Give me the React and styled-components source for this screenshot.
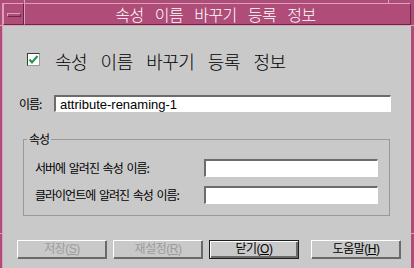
import React from 'react';
import styled, { createGlobalStyle } from 'styled-components';

const PINK = '#b04c78';
const PINK_LIGHT = '#d9a2ba';
const PINK_DARK = '#6a2645';
const GRAY = '#c9c9c9';
const FIELD_DARK = '#6c6c6c';

const GlobalStyle = createGlobalStyle`
  html, body { margin: 0; padding: 0; background: ${PINK}; }
  body { font-family: "Liberation Sans", "Noto Sans CJK KR", sans-serif; }
  * { box-sizing: border-box; }
`;

const line = `linear-gradient(${PINK_LIGHT}, ${PINK_LIGHT})`;

const Window = styled.div`
  width: 414px;
  height: 268px;
  padding: 3px 3px 0 2px;
  display: flex;
  flex-direction: column;
  background:
    ${line} 24px 0 / 1px 3px no-repeat,
    ${line} 388px 0 / 1px 3px no-repeat,
    ${line} 0 233px / 2px 1px no-repeat,
    ${line} 411px 233px / 3px 1px no-repeat,
    ${line} 0 25px / 2px 1px no-repeat,
    ${line} 411px 25px / 3px 1px no-repeat,
    ${PINK};
  overflow: hidden;
`;

const Inner = styled.div`
  flex: 1;
  display: flex;
  flex-direction: column;
  border-left: 1px solid ${PINK_LIGHT};
`;

const TitleBar = styled.header`
  height: 22px;
  display: flex;
`;

const Bevel = styled.div`
  border-style: solid;
  border-width: 1px;
  border-color: ${PINK_LIGHT} ${PINK_DARK} ${PINK_DARK} ${PINK_LIGHT};
  background: ${PINK};
`;

const MenuButton = styled(Bevel)`
  width: 21px;
  display: flex;
  align-items: center;
  justify-content: center;
  padding-top: 2px;
`;

const MenuGlyph = styled.span`
  display: block;
  width: 14px;
  height: 4px;
  border-style: solid;
  border-width: 1px;
  border-color: ${PINK_LIGHT} ${PINK_DARK} ${PINK_DARK} ${PINK_LIGHT};
`;

const Title = styled(Bevel)`
  flex: 1;
  color: #ffffff;
  font-family: "Noto Sans CJK KR", sans-serif;
  font-weight: 300;
  font-size: 16px;
  line-height: 20px;
  letter-spacing: -0.5px;
  word-spacing: 8px;
  text-align: center;
  padding-right: 4px;
`;

const Content = styled.main`
  flex: 1;
  background: ${GRAY};
  border-top: 1px solid ${PINK_LIGHT};
  border-right: 1px solid ${GRAY};
  display: flex;
  flex-direction: column;
  padding-top: 27px;
  font-family: "Liberation Sans", "Noto Sans CJK KR", sans-serif;
  color: #000;
`;

const Header = styled.div`
  display: flex;
  align-items: flex-start;
  gap: 15px;
  padding-left: 24px;
  height: 18px;
`;

const CheckBox = styled.span`
  width: 13px;
  height: 13px;
  background: #fff;
  border-style: solid;
  border-width: 1px;
  border-color: #3c3c3c #9a9a9a #9a9a9a #3c3c3c;
  display: flex;
  align-items: center;
  justify-content: center;
`;

const HeaderText = styled.h1`
  margin: -2px 0 0 0;
  font-family: "Noto Sans CJK KR", sans-serif;
  font-weight: 300;
  font-size: 18px;
  line-height: 20px;
  letter-spacing: -0.5px;
  word-spacing: 10px;
`;

const Label = styled.label`
  font-family: "Noto Sans CJK KR", sans-serif;
  font-size: 12px;
  letter-spacing: -1px;
  word-spacing: 2px;
  line-height: 14px;
  width: ${p => p.$width}px;
  flex: none;
`;

const Field = styled.div`
  width: ${p => p.$width}px;
  height: ${p => p.$height}px;
  flex: none;
  background: #fff;
  border-style: solid;
  border-width: 2px 1px 1px 2px;
  border-color: ${FIELD_DARK} #ffffff #ffffff ${FIELD_DARK};
  padding: 1px 0 0 4px;
  font-family: "Liberation Sans", sans-serif;
  font-size: 13px;
  line-height: 13px;
  white-space: nowrap;
`;

const NameRow = styled.div`
  margin-top: 24px;
  padding-left: 16px;
  display: flex;
  align-items: center;
`;

const Group = styled.fieldset`
  margin: 21px 0 0 20px;
  width: 367px;
  align-self: flex-start;
  padding: 14px 0 11px 0;
  border: 1px solid #999999;
  display: flex;
  flex-direction: column;
  gap: 9px;
`;

const Legend = styled.legend`
  font-family: "Noto Sans CJK KR", sans-serif;
  font-size: 12px;
  line-height: 12px;
  letter-spacing: -1px;
  padding: 0 2px;
  margin-left: 3px;
`;

const GroupRow = styled.div`
  display: flex;
  align-items: center;
  padding-left: 11px;
`;

const ButtonRow = styled.footer`
  margin-top: 24px;
  padding: 0 9px 0 14px;
  display: flex;
  gap: 6px;
`;

const Button = styled.button`
  width: 90px;
  height: 19px;
  padding: 0;
  margin: 0;
  margin-left: ${p => (p.$pushRight ? 'auto' : '0')};
  background: ${GRAY};
  border-style: solid;
  border-width: 1px;
  border-color: ${p => (p.$default ? '#1e1e1e' : '#ffffff #6a6a6a #6a6a6a #ffffff')};
  box-shadow: ${p =>
    p.$default
      ? 'inset 1px 1px #ffffff, inset -2px -2px #6a6a6a'
      : 'inset -1px -1px #6a6a6a'};
  font-family: "Liberation Sans", "Noto Sans CJK KR", sans-serif;
  font-size: 12px;
  letter-spacing: -0.5px;
  line-height: 15px;
  color: #000;
  &:disabled {
    color: #9c9c9c;
  }
  u { text-underline-offset: 1px; }
`;

const Check = () => (
  <svg width="11" height="11" viewBox="0 0 11 11">
    <polyline points="1.5,5.5 4,8.5 9.5,2" fill="none" stroke="#21944a" strokeWidth="2" />
  </svg>
);

export default function App() {
  return (
    <>
      <GlobalStyle />
      <Window>
        <Inner>
          <TitleBar>
            <MenuButton>
              <MenuGlyph />
            </MenuButton>
            <Title>속성 이름 바꾸기 등록 정보</Title>
          </TitleBar>
          <Content>
            <Header>
              <CheckBox>
                <Check />
              </CheckBox>
              <HeaderText>속성 이름 바꾸기 등록 정보</HeaderText>
            </Header>
            <NameRow>
              <Label $width={35}>이름:</Label>
              <Field $width={337} $height={17}>attribute-renaming-1</Field>
            </NameRow>
            <Group>
              <Legend>속성</Legend>
              <GroupRow>
                <Label $width={169}>서버에 알려진 속성 이름:</Label>
                <Field $width={174} $height={18} />
              </GroupRow>
              <GroupRow>
                <Label $width={169}>클라이언트에 알려진 속성 이름:</Label>
                <Field $width={174} $height={18} />
              </GroupRow>
            </Group>
            <ButtonRow>
              <Button disabled>저장(<u>S</u>)</Button>
              <Button disabled>재설정(<u>R</u>)</Button>
              <Button $default>닫기(<u>O</u>)</Button>
              <Button $pushRight>도움말(<u>H</u>)</Button>
            </ButtonRow>
          </Content>
        </Inner>
      </Window>
    </>
  );
}
